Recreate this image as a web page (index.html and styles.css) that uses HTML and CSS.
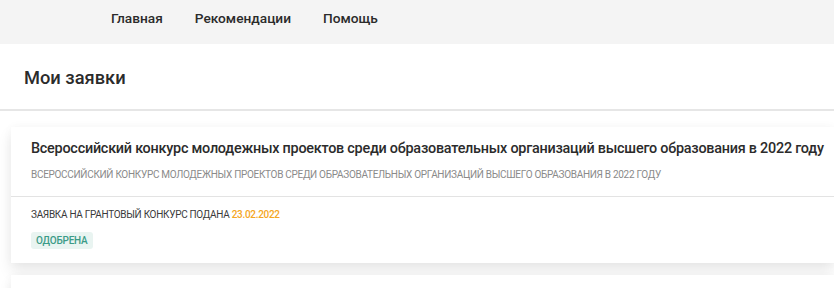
FILE: index.html
```html
<!DOCTYPE html>
<html lang="ru">
<head>
    <meta charset="UTF-8">
    <meta name="viewport" content="width=device-width, initial-scale=1.0">
    <title>Мои заявки</title>
    <link rel="stylesheet" href="styles.css">
</head>
<body>
    <header class="topbar">
        <nav class="nav">
            <a class="nav-link" href="#">Главная</a>
            <a class="nav-link" href="#">Рекомендации</a>
            <a class="nav-link" href="#">Помощь</a>
        </nav>
    </header>

    <div class="page-head">
        <h1>Мои заявки</h1>
    </div>

    <div class="list">
        <div class="card">
            <div class="card-top">
                <div class="card-title">Всероссийский конкурс молодежных проектов среди образовательных организаций высшего образования в 2022 году</div>
                <div class="card-sub">Всероссийский конкурс молодежных проектов среди образовательных организаций высшего образования в 2022 году</div>
            </div>
            <div class="card-bottom">
                <div class="card-meta">Заявка на грантовый конкурс подана <span class="date">23.02.2022</span></div>
                <span class="badge badge-ok">Одобрена</span>
            </div>
        </div>
        <div class="card card-next"></div>
    </div>
</body>
</html>
```

FILE: styles.css
```css
body {
    font-family: Roboto, 'Noto Sans', sans-serif;
    margin: 0;
    background: #fff;
    color: #2b2b2b;
    overflow: hidden;
}
.topbar {
    background: #f4f4f4;
    height: 44px;
}
.nav {
    display: flex;
    gap: 32px;
    padding-left: 111px;
    height: 35px;
    align-items: center;
}
.nav-link {
    color: #2b2b2b;
    text-decoration: none;
    font-size: 13.7px;
    font-weight: 500;
}
.page-head {
    height: 65px;
    border-bottom: 2px solid #e6e6e6;
    display: flex;
    align-items: center;
    padding-left: 24px;
}
.page-head h1 {
    margin: 0 0 -2px;
    font-size: 18.3px;
    font-weight: 500;
}
.list {
    padding: 16px 0 0 11px;
}
.card {
    background: #fff;
    box-shadow: 0 8px 14px rgba(0,0,0,0.09), 0 0 10px rgba(0,0,0,0.03);
}
.card-top {
    padding: 12px 20px 15px;
    border-bottom: 1px solid #e3e3e3;
}
.card-title {
    font-size: 14.4px;
    font-weight: 500;
    letter-spacing: -0.24px;
    white-space: nowrap;
    line-height: 20px;
}
.card-sub {
    margin-top: 10px;
    font-size: 10px;
    line-height: 12px;
    text-transform: uppercase;
    color: #8a8a8a;
    white-space: nowrap;
    letter-spacing: -0.3px;
}
.card-bottom {
    padding: 12px 20px 14px;
    display: flex;
    flex-direction: column;
    align-items: flex-start;
    gap: 11px;
}
.card-meta {
    font-size: 10px;
    line-height: 12px;
    text-transform: uppercase;
    color: #3a3a3a;
    letter-spacing: -0.3px;
}
.date {
    color: #f5a623;
    font-weight: 500;
}
.badge {
    padding: 3px 5px;
    font-size: 10px;
    line-height: 11px;
    font-weight: 500;
    letter-spacing: -0.2px;
    text-transform: uppercase;
    border-radius: 3px;
}
.badge-ok {
    background: #e9f4f1;
    color: #3b9b87;
}
.card-next {
    margin-top: 12px;
    height: 40px;
}
```
